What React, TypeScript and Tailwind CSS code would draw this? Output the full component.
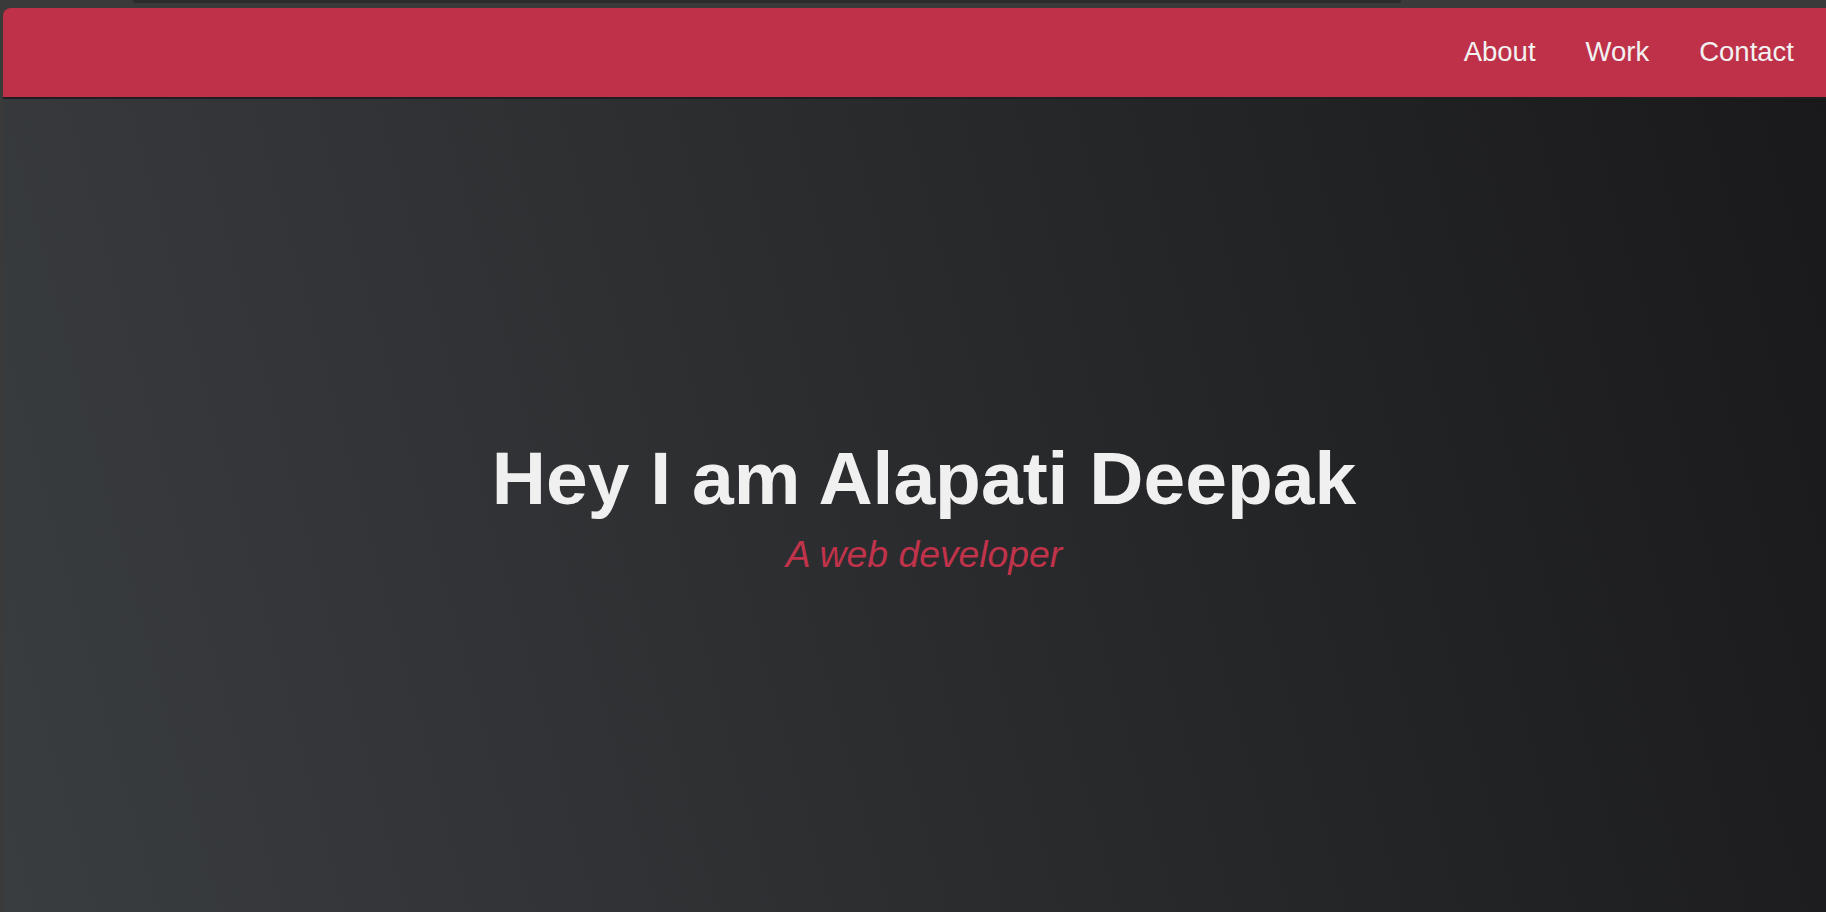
export default function App() {
  const links = ['About', 'Work', 'Contact'];

  return (
    <div className="h-screen w-full overflow-hidden bg-[#3a3a3a] flex flex-col font-['Liberation_Sans',Arial,sans-serif]">
      {/* browser chrome strip */}
      <div className="h-2 shrink-0 flex">
        <div className="ml-[133px] w-[1268px] h-[3px] bg-[#2b2b2b] rounded-b-[6px]" />
      </div>

      <div className="flex-1 ml-[3px] w-[1842px] shrink-0 flex flex-col rounded-tl-[8px] overflow-hidden">
        {/* Header */}
        <header className="h-[91px] shrink-0 bg-[#bf3148] border-b-2 border-[#1e1e20] flex items-center justify-end pr-[51px]">
          <nav className="flex items-center gap-[50px] -mt-[1px]">
            {links.map((link) => (
              <a key={link} href={`#${link.toLowerCase()}`} className="text-[27.5px] text-[#f2f2f2] leading-none">
                {link}
              </a>
            ))}
          </nav>
        </header>

        {/* Hero */}
        <main className="flex-1 flex flex-col items-center justify-center bg-[linear-gradient(75deg,#3a3d40,#19191b)]">
          <h1 className="text-[75px] font-bold text-[#f0f0f0] leading-[1.15]">Hey I am Alapati Deepak</h1>
          <p className="mt-3 text-[37.3px] italic text-[#c0334a] leading-[1.15]">A web developer</p>
        </main>
      </div>
    </div>
  );
}
